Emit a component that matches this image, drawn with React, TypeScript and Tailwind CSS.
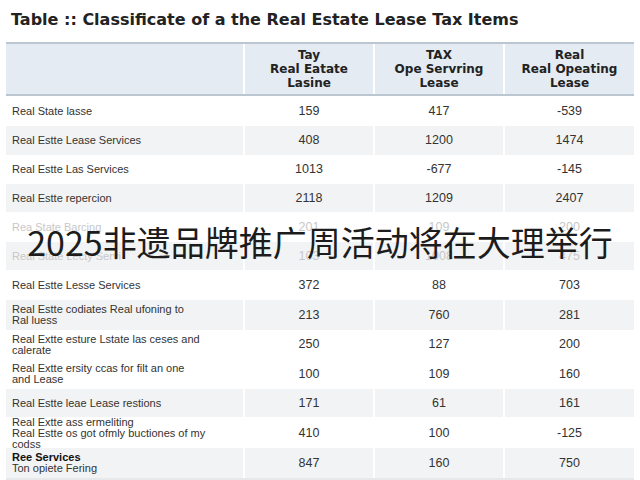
import { FunctionComponent } from "react";

type Row = {
  label: string[];
  bold?: boolean;
  a: string;
  b: string;
  c: string;
  shade?: boolean;
  faded?: boolean;
  h: string;
};

const rows: Row[] = [
  { label: ["Real State lasse"], a: "159", b: "417", c: "-539", h: "h-[30px]" },
  { label: ["Real Estte Lease Services"], a: "408", b: "1200", c: "1474", shade: true, h: "h-[29px]" },
  { label: ["Real Estte Las Services"], a: "1013", b: "-677", c: "-145", h: "h-[29px]" },
  { label: ["Real Estte repercion"], a: "2118", b: "1209", c: "2407", shade: true, h: "h-[28px]" },
  { label: ["Rea State Barcing"], a: "201", b: "109", c: "200", faded: true, h: "h-[30px]" },
  { label: ["Real State Lecty Servi"], a: "103", b: "1008", c: "475", faded: true, shade: true, h: "h-[28px]" },
  { label: ["Real Estte Lesse Services"], a: "372", b: "88", c: "703", h: "h-[30px]" },
  { label: ["Real Estte codiates Real ufoning to", "Ral luess"], a: "213", b: "760", c: "281", shade: true, h: "h-[30px]" },
  { label: ["Real Extte esture Lstate las ceses and", "calerate"], a: "250", b: "127", c: "200", h: "h-[29px]" },
  { label: ["Real Extte ersity ccas for filt an one", "and Lease"], a: "100", b: "109", c: "160", h: "h-[30px]" },
  { label: ["Real Estte leae Lease restions"], a: "171", b: "61", c: "161", shade: true, h: "h-[28px]" },
  { label: ["Real Extte ass ermeliting", "Real Estte os got ofmly buctiones of my", "codss"], a: "410", b: "100", c: "-125", h: "h-[31px]" },
  { label: ["Ree Services", "Ton opiete Fering"], bold: true, a: "847", b: "160", c: "750", shade: true, h: "h-[30px]" },
];

const cols = "grid grid-cols-[237px_128px_128px_129px] gap-x-[2px]";

const App: FunctionComponent = () => {
  return (
    <div
      className="relative w-[640px] h-[480px] bg-white overflow-hidden"
      style={{ fontFamily: '"Liberation Sans", Arial, sans-serif' }}
    >
      <div
        className="pl-[11px] pt-[11px] h-[42px] text-[16px] font-bold text-[#222] leading-[18px]"
        style={{ fontFamily: '"DejaVu Sans", Verdana, sans-serif' }}
      >
        Table :: Classificate of a the Real Estate Lease Tax Items
      </div>

      <div className="ml-[6px] w-[628px]">
        <div className={`${cols} h-[54px] border-t-2 border-b-2 border-[#bcc6d0]`}>
          <div className="bg-[#e4ebf2]" />
          {[
            ["Tay", "Real Eatate", "Lasine"],
            ["TAX", "Ope Servring", "Lease"],
            ["Real", "Real Opeating", "Lease"],
          ].map((lines, i) => (
            <div
              key={i}
              className="bg-[#e4ebf2] flex flex-col items-center justify-center text-[12px] font-bold leading-[14px] text-[#222]"
              style={{ fontFamily: '"DejaVu Sans", Verdana, sans-serif' }}
            >
              {lines.map((l, j) => (
                <span key={j}>{l}</span>
              ))}
            </div>
          ))}
        </div>

        {rows.map((r, i) => {
          const bg = r.shade ? "bg-[#f2f3f4]" : "bg-white";
          const text = r.faded ? "text-[#c8c8c8]" : "text-[#333]";
          return (
            <div key={i} className={`${cols} ${r.h}`}>
              <div className={`${bg} ${text} flex flex-col justify-center pl-[6px] text-[11px] leading-[11px]`}>
                {r.label.map((l, j) => (
                  <span key={j} className={r.bold && j === 0 ? "font-bold text-[#111]" : ""}>
                    {l}
                  </span>
                ))}
              </div>
              {[r.a, r.b, r.c].map((v, j) => (
                <div key={j} className={`${bg} ${text} flex items-center justify-center text-[12.5px]`}>
                  {v}
                </div>
              ))}
            </div>
          );
        })}
        <div className="h-[2px] bg-[#e6e8ea]" />
      </div>

      <div
        className="absolute left-0 right-0 top-[222px] text-center text-[34px] leading-[40px] text-[#1c1c1c]"
        style={{ fontFamily: '"Noto Sans CJK SC", "Noto Sans", sans-serif' }}
      >
        2025非遗品牌推广周活动将在大理举行
      </div>
    </div>
  );
};

export default App;
